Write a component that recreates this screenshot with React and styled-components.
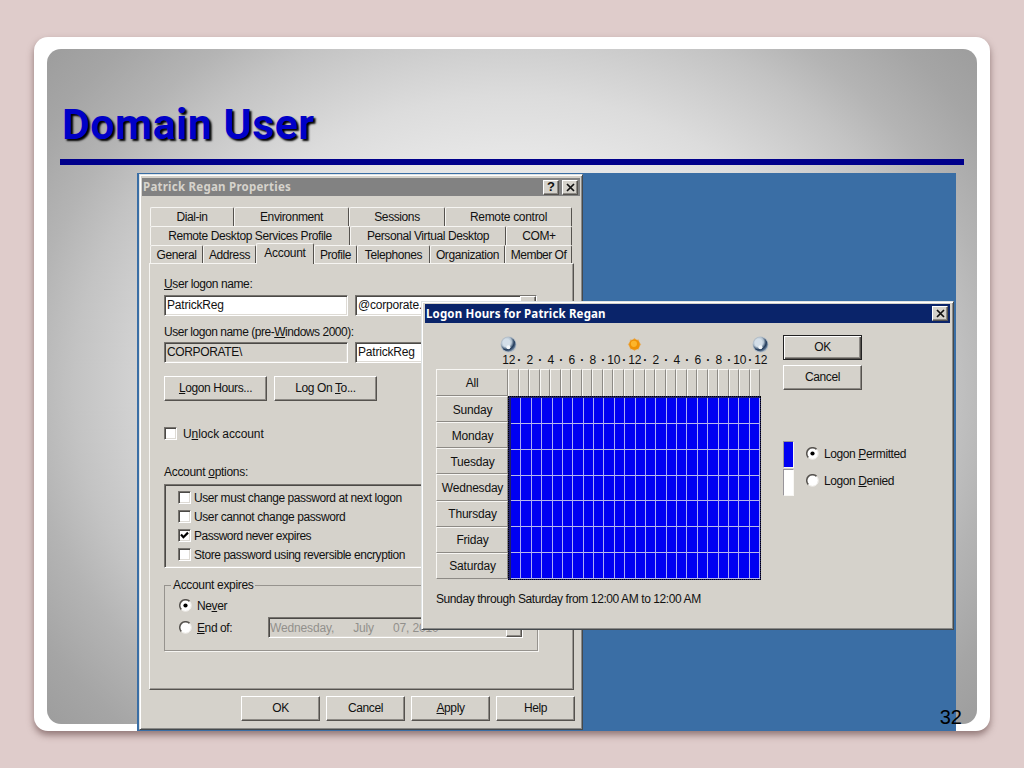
import React from "react";
import styled, { createGlobalStyle, css } from "styled-components";

const Global = createGlobalStyle`
  * { box-sizing: border-box; }
  html, body { margin: 0; padding: 0; }
  body {
    width: 1024px;
    height: 768px;
    overflow: hidden;
    background: #dfcccb;
    font-family: "Liberation Sans", Arial, sans-serif;
  }
`;

const face = "#d5d2cb";

const Page = styled.main`
  width: 1024px;
  height: 768px;
  padding: 37px 34px;
  background: #dfcccb;
`;
const Card = styled.section`
  position: relative;
  width: 956px;
  height: 694px;
  padding: 12px 13px 7px;
  border-radius: 14px;
  background: #fff;
  box-shadow: 0 4px 7px rgba(80, 50, 50, 0.55);
`;
const Surface = styled.div`
  width: 930px;
  height: 675px;
  padding: 0 13px;
  border-radius: 14px;
  background: radial-gradient(ellipse 600px 520px at 50% 50%, #ececec 0%, #e6e6e6 45%, #dcdcdc 56%, #cfcfcf 65%, #c3c3c3 73%, #b4b4b4 81%, #a5a5a5 92%, #9e9e9e 100%);
`;
const Title = styled.h1`
  margin: 0;
  padding: 47px 0 0 2px;
  height: 110px;
  line-height: 56px;
  font-family: Roboto, "Liberation Sans", sans-serif;
  font-size: 43px;
  font-weight: 700;
  letter-spacing: 0.4px;
  white-space: nowrap;
  color: #0000c8;
  text-shadow: 2px 2px 2px #000;
`;
const Rule = styled.div`
  width: 904px;
  height: 6px;
  background: #00008b;
`;
const Desktop = styled.div`
  position: relative;
  width: 819px;
  height: 558px;
  margin: 8px 0 0 77px;
  background: #3a6ea5;
`;
const PageNumber = styled.div`
  position: absolute;
  right: 28px;
  bottom: 2px;
  font-size: 20px;
  line-height: 24px;
  color: #000;
`;

const Window = styled.section`
  position: absolute;
  left: ${(p) => p.$x}px;
  top: ${(p) => p.$y}px;
  width: ${(p) => p.$w}px;
  height: ${(p) => p.$h}px;
  padding: ${(p) => p.$pad};
  background: ${face};
  border: 1px solid;
  border-color: #dfe3e4 #45494c #45494c #dfe3e4;
  box-shadow: inset 1px 1px #fff, inset -1px -1px #8a8a88;
  font-size: 12px;
  line-height: 14px;
  letter-spacing: -0.4px;
  color: #111;
  overflow: hidden;
`;
const TitleBar = styled.header`
  display: flex;
  align-items: center;
  gap: 3px;
  height: ${(p) => p.$h}px;
  padding: 0 2px 0 1px;
  background: ${(p) => (p.$active ? "#0a246a" : "#828282")};
  color: ${(p) => (p.$active ? "#fff" : "#d6d3cc")};
  font: 700 11.5px/18px "Noto Sans", "Open Sans", sans-serif;
  letter-spacing: ${(p) => p.$ls || "0px"};
  white-space: nowrap;
`;
const Caption = styled.span`
  flex: 1;
`;
const raised = css`
  background: ${face};
  border: 1px solid;
  border-color: #fff #55524e #55524e #fff;
  box-shadow: inset -1px -1px #8d8a85;
`;
const CaptionButton = styled.button`
  ${raised}
  display: grid;
  place-items: center;
  width: 16px;
  height: 15px;
  padding: 0;
  font: 700 13px/12px "Liberation Sans", sans-serif;
  color: #111;
`;
const Button = styled.button`
  ${raised}
  width: ${(p) => p.$w || 79}px;
  height: 25px;
  padding: 0 0 1px;
  font: 12px/14px "Liberation Sans", sans-serif;
  letter-spacing: -0.4px;
  color: #111;
  ${(p) => p.$default && css`
    border-color: #222;
    box-shadow: inset 1px 1px #fff, inset -1px -1px #55524e, inset -2px -2px #8d8a85;
  `}
`;

const TabRow = styled.div`
  display: flex;
  width: 422px;
  height: ${(p) => p.$h || 19}px;
  margin-left: 8px;
`;
const Tab = styled.div`
  width: ${(p) => p.$w}px;
  padding-top: 2px;
  text-align: center;
  white-space: nowrap;
  letter-spacing: ${(p) => p.$ls || "-0.4px"};
  border: 1px solid;
  border-color: #f6f5f2 #55524e transparent #f6f5f2;
  border-bottom: 0;
  border-radius: 2px 2px 0 0;
  background: ${face};
  ${(p) => p.$selected && css`
    position: relative;
    height: 21px;
    margin-top: -2px;
    border-top-color: #f6f5f2;
  `}
`;
const Panel = styled.div`
  width: 425px;
  height: 427px;
  margin-left: 7px;
  padding: 13px 0 0 14px;
  border: 1px solid;
  border-color: #f6f5f2 #55524e #55524e #f6f5f2;
  box-shadow: inset -1px -1px #9a9792;
`;
const Label = styled.div`
  height: 14px;
  margin-top: ${(p) => p.$mt || 0}px;
  white-space: nowrap;
  letter-spacing: ${(p) => p.$ls || "-0.4px"};
`;
const Row = styled.div`
  display: flex;
  gap: 7px;
  margin-top: ${(p) => p.$mt}px;
`;
const sunken = css`
  border: 1px solid;
  border-color: #77746f #fff #fff #77746f;
  box-shadow: inset 1px 1px #4b4946, inset -1px -1px #dedbd5;
`;
const Field = styled.div`
  ${sunken}
  display: flex;
  align-items: center;
  width: ${(p) => p.$w || 184}px;
  height: 21px;
  padding: ${(p) => (p.$gray ? "1px 0 0 1px" : "0 0 1px 2px")};
  background: ${(p) => (p.$off ? face : "#fff")};
  color: ${(p) => (p.$gray ? "#92908c" : "#111")};
  letter-spacing: ${(p) => p.$ls || "-0.2px"};
  white-space: pre;
`;
const DropButton = styled.span`
  ${raised}
  display: grid;
  place-items: center;
  width: 16px;
  height: 18px;
  margin-left: auto;
`;
const OptionLine = styled.label`
  display: flex;
  align-items: center;
  gap: ${(p) => p.$gap || 3}px;
  height: ${(p) => p.$h || 19}px;
  margin-top: ${(p) => p.$mt || 0}px;
  white-space: nowrap;
  letter-spacing: ${(p) => p.$ls || "-0.4px"};
`;
const CheckBox = styled.span`
  ${sunken}
  display: grid;
  place-items: center;
  width: 13px;
  height: 13px;
  margin-top: -1px;
  background: #fff;
`;
const Options = styled.div`
  ${sunken}
  width: 373px;
  height: 84px;
  margin-top: 5px;
  padding: 3px 0 0 13px;
`;
const Group = styled.fieldset`
  width: 374px;
  height: 73px;
  margin: 10px 0 0;
  padding: 0 0 0 14px;
  border: 1px solid #96938e;
  box-shadow: 1px 1px #f6f5f2;
  legend {
    height: 14px;
    margin-left: -8px;
    padding: 0 2px;
    letter-spacing: -0.33px;
  }
`;
const ExpiryLine = styled.div`
  display: flex;
  align-items: center;
  height: 21px;
  margin-top: ${(p) => p.$mt}px;
`;
const ExpiryChoice = styled.div`
  width: 89px;
`;
const Footer = styled.footer`
  display: flex;
  gap: 6px;
  margin: 6px 0 0 99px;
`;

const HoursBody = styled.div`
  display: flex;
  gap: 22px;
  padding: 12px 0 0 11px;
`;
const Schedule = styled.div`
  width: 325px;
`;
const SkyRow = styled.div`
  display: flex;
  justify-content: space-between;
  width: 269px;
  height: 18px;
  margin-left: 64px;
  padding-top: 1px;
`;
const HourScale = styled.div`
  display: grid;
  grid-template-columns: repeat(25, 10.5px);
  height: 16px;
  margin-left: 67.5px;
  letter-spacing: -0.1px;
  span {
    display: flex;
    justify-content: center;
    line-height: 15px;
  }
  span:nth-child(even) {
    font-weight: 700;
  }
`;
const AllRow = styled.div`
  display: flex;
  height: 27px;
`;
const DayButton = styled.div`
  display: grid;
  place-items: center;
  width: 72px;
  height: ${(p) => p.$h || 26.15}px;
  padding: ${(p) => (p.$h ? 0 : "1px 0 0 1px")};
  border: 1px solid;
  border-color: #f8f7f4 #8d8a85 #8d8a85 #f8f7f4;
  letter-spacing: -0.2px;
`;
const HourButton = styled.div`
  width: 10.5px;
  border-left: 1px solid #f8f7f4;
  border-top: 1px solid #f8f7f4;
  border-right: 1px solid #8d8a85;
`;
const Week = styled.div`
  display: flex;
  height: 183px;
`;
const Cells = styled.div`
  display: grid;
  grid-template-columns: repeat(24, 1fr);
  grid-template-rows: repeat(7, 1fr);
  width: 253px;
  height: 184px;
  padding: 1px 0 0 2px;
  border: 1px dotted #000;
  background: #20206a;
`;
const Cell = styled.div`
  background: #0000f2;
  border-right: 1px solid #aaaaf4;
  border-bottom: 1px solid #b8b8ea;
`;
const Summary = styled.div`
  margin-top: 13px;
  white-space: nowrap;
  letter-spacing: -0.41px;
`;
const Side = styled.aside`
  display: flex;
  flex-direction: column;
  gap: 5px;
`;
const Legend = styled.div`
  display: flex;
  gap: 12px;
  margin-top: 46px;
`;
const Choices = styled.div`
  margin-top: -1px;
`;
const Swatches = styled.div`
  display: flex;
  flex-direction: column;
  gap: 1px;
`;
const Swatch = styled.div`
  width: 11px;
  height: 27px;
  border: 1px solid;
  border-color: #98959a #f8f7f4 #f8f7f4 #98959a;
  background: ${(p) => p.$c};
`;
const TabGap = styled.div`
  height: 11px;
`;

const CrossGlyph = () => (
  <svg width="9" height="9" viewBox="0 0 9 9">
    <path d="M1 1 8 8M8 1 1 8" stroke="#111" strokeWidth="1.7" />
  </svg>
);
const Arrow = () => (
  <svg width="7" height="4" viewBox="0 0 7 4">
    <path d="M0 0H7L3.5 4Z" fill="#333" />
  </svg>
);
const Tick = () => (
  <svg width="9" height="9" viewBox="0 0 9 9">
    <path d="M1 3.6 3.4 6.2 8 1.6" fill="none" stroke="#000" strokeWidth="2.2" />
  </svg>
);
const Radio = ({ on }) => (
  <svg width="13" height="13" viewBox="0 0 13 13">
    <circle cx="6.5" cy="6.5" r="5.5" fill="#fff" />
    <path d="M2.4 10.6A5.7 5.7 0 0 1 10.6 2.4" fill="none" stroke="#55524e" strokeWidth="1.5" />
    <path d="M10.6 2.4A5.7 5.7 0 0 1 2.4 10.6" fill="none" stroke="#f1efeb" strokeWidth="1" />
    {on && <circle cx="6.5" cy="6.5" r="2.1" fill="#000" />}
  </svg>
);
const Moon = () => (
  <svg width="17" height="17" viewBox="0 0 17 17">
    <defs>
      <radialGradient id="night" cx="35%" cy="32%" r="72%">
        <stop offset="0" stopColor="#f4f8fb" />
        <stop offset="0.5" stopColor="#b4c4d2" />
        <stop offset="0.76" stopColor="#1f3858" />
        <stop offset="1" stopColor="#7c92aa" />
      </radialGradient>
    </defs>
    <circle cx="8.5" cy="8.5" r="8" fill="#b3bdc6" />
    <circle cx="8.5" cy="8.5" r="7.2" fill="url(#night)" />
    <circle cx="6.6" cy="7" r="3.9" fill="#d3dee8" />
    <circle cx="8.4" cy="11.2" r="2" fill="#f2f6f9" />
  </svg>
);
const Sun = () => (
  <svg width="17" height="17" viewBox="0 0 17 17">
    <path
      d="M8.5 1.8 10.3 3.8 13 3.4 13.4 6.2 15.3 8.5 13.4 10.6 13 13.4 10.3 13.2 8.5 15.2 6.7 13.2 4 13.4 3.6 10.6 1.7 8.5 3.6 6.2 4 3.4 6.7 3.8Z"
      fill="#e3b069"
    />
    <circle cx="8.5" cy="8.5" r="5.3" fill="#ef9206" />
    <circle cx="7.9" cy="7.8" r="3.1" fill="#fcb52c" />
  </svg>
);

const days = ["Sunday", "Monday", "Tuesday", "Wednesday", "Thursday", "Friday", "Saturday"];
const scale = Array.from({ length: 25 }, (_, i) => (i % 2 ? "·" : String(i % 12 || 12)));

function PropertiesWindow() {
  return (
    <Window $x={2} $y={1} $w={444} $h={556} $pad="3px 2px">
      <TitleBar $h={18} $ls="0.24px">
        <Caption>Patrick Regan Properties</Caption>
        <CaptionButton>?</CaptionButton>
        <CaptionButton><CrossGlyph /></CaptionButton>
      </TitleBar>
      <TabGap />
      <TabRow>
        <Tab $w={84}>Dial-in</Tab>
        <Tab $w={115} $ls="-0.4px">Environment</Tab>
        <Tab $w={96}>Sessions</Tab>
        <Tab $w={127} $ls="-0.3px">Remote control</Tab>
      </TabRow>
      <TabRow>
        <Tab $w={200}>Remote Desktop Services Profile</Tab>
        <Tab $w={156}>Personal Virtual Desktop</Tab>
        <Tab $w={66}>COM+</Tab>
      </TabRow>
      <TabRow $h={18}>
        <Tab $w={53}>General</Tab>
        <Tab $w={53}>Address</Tab>
        <Tab $w={58} $selected $ls="-0.3px">Account</Tab>
        <Tab $w={43}>Profile</Tab>
        <Tab $w={73}>Telephones</Tab>
        <Tab $w={75}>Organization</Tab>
        <Tab $w={67} $ls="-0.5px">Member Of</Tab>
      </TabRow>
      <Panel>
        <Label><u>U</u>ser logon name:</Label>
        <Row $mt={4}>
          <Field>PatrickReg</Field>
          <Field $w={182}>@corporate.<DropButton><Arrow /></DropButton></Field>
        </Row>
        <Label $mt={9} $ls="-0.47px">User logon name (pre-<u>W</u>indows 2000):</Label>
        <Row $mt={3}>
          <Field $off $ls="-0.35px">CORPORATE\</Field>
          <Field $w={182}>PatrickReg</Field>
        </Row>
        <Row $mt={13}>
          <Button $w={103}><u>L</u>ogon Hours...</Button>
          <Button $w={103}>Log On <u>T</u>o...</Button>
        </Row>
        <OptionLine $gap={6} $h={14} $mt={26} $ls="-0.1px">
          <CheckBox />
          <span>U<u>n</u>lock account</span>
        </OptionLine>
        <Label $mt={24} $ls="-0.3px">Account <u>o</u>ptions:</Label>
        <Options>
          <OptionLine $ls="-0.42px"><CheckBox />User must change password at next logon</OptionLine>
          <OptionLine><CheckBox />User cannot change password</OptionLine>
          <OptionLine $ls="-0.5px"><CheckBox><Tick /></CheckBox>Password never expires</OptionLine>
          <OptionLine $ls="-0.44px"><CheckBox />Store password using reversible encryption</OptionLine>
        </Options>
        <Group>
          <legend>Account expires</legend>
          <ExpiryLine $mt={3}>
            <OptionLine $gap={5}><Radio on /><span>Ne<u>v</u>er</span></OptionLine>
          </ExpiryLine>
          <ExpiryLine $mt={1}>
            <ExpiryChoice>
              <OptionLine $gap={5}><Radio /><span><u>E</u>nd of:</span></OptionLine>
            </ExpiryChoice>
            <Field $off $gray $w={255} $ls="-0.15px">{"Wednesday,      July      07, 2010"}<DropButton><Arrow /></DropButton></Field>
          </ExpiryLine>
        </Group>
      </Panel>
      <Footer>
        <Button>OK</Button>
        <Button>Cancel</Button>
        <Button><u>A</u>pply</Button>
        <Button>Help</Button>
      </Footer>
    </Window>
  );
}

function LogonHoursWindow() {
  return (
    <Window $x={284} $y={128} $w={533} $h={329} $pad="2px 3px">
      <TitleBar $active $h={19} $ls="0.15px">
        <Caption>Logon Hours for Patrick Regan</Caption>
        <CaptionButton><CrossGlyph /></CaptionButton>
      </TitleBar>
      <HoursBody>
        <Schedule>
          <SkyRow><Moon /><Sun /><Moon /></SkyRow>
          <HourScale>
            {scale.map((t, i) => <span key={i}>{t}</span>)}
          </HourScale>
          <AllRow>
            <DayButton $h={27}>All</DayButton>
            {Array.from({ length: 24 }, (_, i) => <HourButton key={i} />)}
          </AllRow>
          <Week>
            <div>{days.map((d) => <DayButton key={d}>{d}</DayButton>)}</div>
            <Cells>{Array.from({ length: 168 }, (_, i) => <Cell key={i} />)}</Cells>
          </Week>
          <Summary>Sunday through Saturday from 12:00 AM to 12:00 AM</Summary>
        </Schedule>
        <Side>
          <Button $default>OK</Button>
          <Button>Cancel</Button>
          <Legend>
            <Swatches>
              <Swatch $c="#0000f2" />
              <Swatch $c="#fff" />
            </Swatches>
            <Choices>
              <OptionLine $gap={5} $h={27}><Radio on /><span>Logon <u>P</u>ermitted</span></OptionLine>
              <OptionLine $gap={5} $h={27}><Radio /><span>Logon <u>D</u>enied</span></OptionLine>
            </Choices>
          </Legend>
        </Side>
      </HoursBody>
    </Window>
  );
}

export default function App() {
  return (
    <Page>
      <Global />
      <Card>
        <Surface>
          <Title>Domain User</Title>
          <Rule />
          <Desktop>
            <PropertiesWindow />
            <LogonHoursWindow />
          </Desktop>
        </Surface>
        <PageNumber>32</PageNumber>
      </Card>
    </Page>
  );
}
